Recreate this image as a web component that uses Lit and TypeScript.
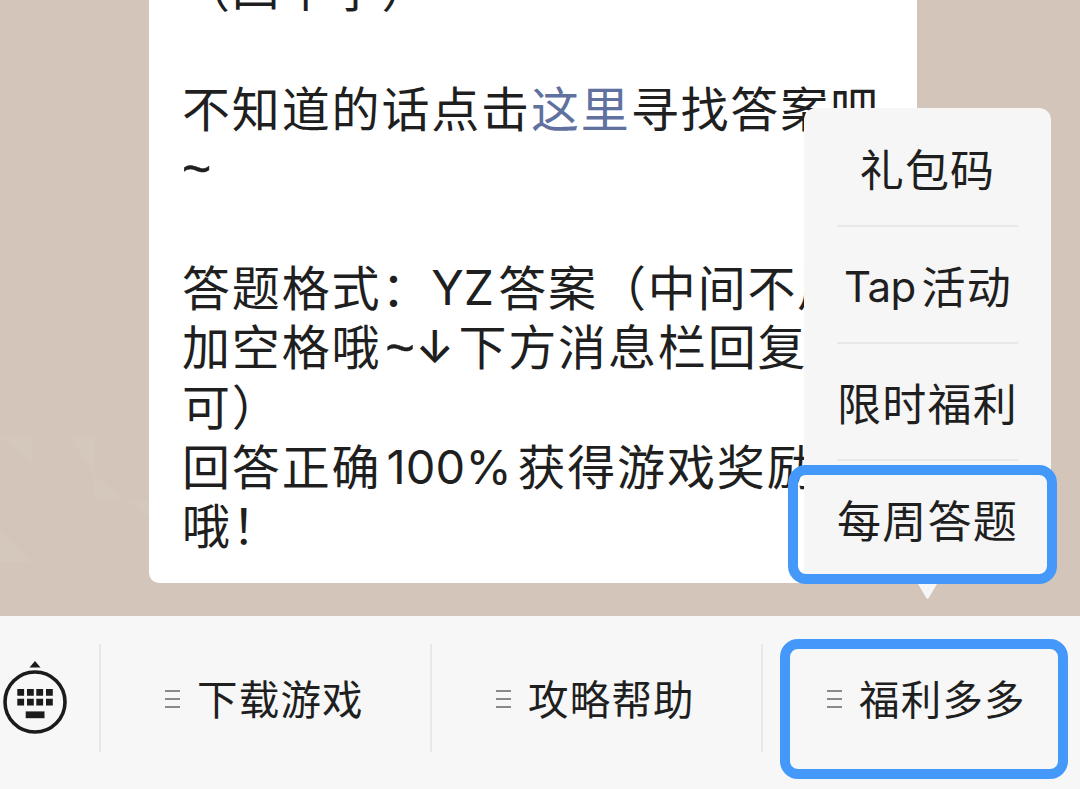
import { html, css, svg, LitElement } from 'lit';
import { customElement, property } from 'lit/decorators.js';
import { classMap } from 'lit/directives/class-map.js';

type Run = { text: string; kind?: 'link' | 'latin' | 'tilde' | 'arrow' | 'percent' };

const lines: Run[][] = [
  [{ text: '（四个字）' }],
  [],
  [{ text: '不知道的话点击' }, { text: '这里', kind: 'link' }, { text: '寻找答案吧' }],
  [{ text: '~', kind: 'tilde' }],
  [],
  [{ text: '答题格式：' }, { text: 'YZ', kind: 'latin' }, { text: '答案（中间不用' }],
  [{ text: '加空格哦' }, { text: '~', kind: 'tilde' }, { text: '↓', kind: 'arrow' }, { text: '下方消息栏回复即' }],
  [{ text: '可）' }],
  [{ text: '回答正确' }, { text: '100%', kind: 'percent' }, { text: '获得游戏奖励' }],
  [{ text: '哦！' }],
];

@customElement('chat-message')
export class ChatMessage extends LitElement {
  static styles = css`
    :host {
      display: block;
      width: 768px;
      box-sizing: border-box;
      padding: 0 0 29px 33px;
      background: #fff;
      border-radius: 10px;
      color: #1f1f1f;
      font-size: 48px;
      letter-spacing: 1.85px;
    }
    .line {
      height: 59.7px;
      line-height: 59.7px;
      white-space: pre;
      display: flex;
    }
    .link {
      color: #61719f;
    }
    .latin, .percent, .arrow {
      font-family: Inter, sans-serif;
      letter-spacing: 0;
      flex: none;
    }
    .latin {
      width: 67px;
      padding-top: 2px;
      box-sizing: border-box;
    }
    .tilde {
      font-family: 'Liberation Sans', sans-serif;
      font-size: 50px;
      letter-spacing: 0;
      width: 33px;
      padding: 4px 0 0 4px;
      box-sizing: border-box;
      flex: none;
      -webkit-text-stroke: 0.5px currentColor;
    }
    .tilde:first-child {
      padding-left: 0;
    }
    .arrow {
      width: 44px;
      font-size: 45px;
      font-weight: 500;
      text-indent: 1px;
      padding-top: 2px;
      box-sizing: border-box;
    }
    .percent {
      width: 136px;
      padding: 2px 0 0 5px;
      font-size: 47px;
      letter-spacing: 0.2px;
      box-sizing: border-box;
    }
  `;

  render() {
    return html`${lines.map(
      (line) => html`<div class="line">${line.map((r) => html`<span class="${r.kind ?? 'text'}">${r.text}</span>`)}</div>`
    )}`;
  }
}

@customElement('popup-menu')
export class PopupMenu extends LitElement {
  static styles = css`
    :host {
      display: block;
      width: 247px;
      height: 475px;
      background: #f6f6f6;
      border-radius: 12px 12px 10px 10px;
      color: #1f1f1f;
      font-size: 44px;
      letter-spacing: 1.2px;
    }
    .item {
      position: relative;
      height: 117px;
      margin: 0 33px;
      box-sizing: border-box;
      border-bottom: 2px solid #e8e8e8;
      display: flex;
      align-items: center;
      justify-content: center;
      white-space: nowrap;
      padding-top: 1px;
    }
    .item:first-child {
      height: 119px;
      padding-top: 3px;
    }
    .item:last-of-type {
      border-bottom-color: transparent;
    }
    .latin {
      font-family: Inter, sans-serif;
      font-size: 42px;
      letter-spacing: -0.6px;
      margin: 0 6px 0 1px;
      padding-top: 2px;
    }
    .marked::after {
      content: '';
      position: absolute;
      inset: 4px -39px -8px -49px;
      border: 10px solid #4398fa;
      border-radius: 18px;
    }
    .tip {
      position: absolute;
      left: 114px;
      top: 476px;
      width: 19px;
      height: 15px;
      background: #f6f6f6;
      clip-path: polygon(0 0, 100% 0, 56% 94%, 50% 100%, 44% 94%);
    }
  `;

  render() {
    return html`
      <div class="item">礼包码</div>
      <div class="item"><span class="latin">Tap</span>活动</div>
      <div class="item">限时福利</div>
      <div class="item marked">每周答题</div>
      <span class="tip"></span>
    `;
  }
}

@customElement('menu-tab')
export class MenuTab extends LitElement {
  @property() label = '';
  @property({ type: Boolean }) marked = false;

  static styles = css`
    :host {
      display: block;
      width: 331px;
      height: 108px;
      box-sizing: border-box;
      border-left: 2px solid #e8e8e8;
      flex: none;
    }
    .tab {
      position: relative;
      display: flex;
      align-items: center;
      height: 108px;
      padding-left: 64px;
      color: #1f1f1f;
      font-size: 40.5px;
      letter-spacing: 1.2px;
      white-space: nowrap;
    }
    .bars {
      width: 15px;
      height: 18px;
      margin: 1px 17px 0 0;
      flex: none;
      display: flex;
      flex-direction: column;
      justify-content: space-between;
    }
    .bar {
      height: 2px;
      background: #8a8a8a;
    }
    .label {
      margin-top: -2px;
    }
    .marked::after {
      content: '';
      position: absolute;
      left: 17px;
      top: -5px;
      width: 268px;
      height: 120px;
      border: 10px solid #4398fa;
      border-radius: 18px;
    }
  `;

  render() {
    return html`
      <div class=${classMap({ tab: true, marked: this.marked })}>
        <span class="bars"><i class="bar"></i><i class="bar"></i><i class="bar"></i></span>
        <span class="label">${this.label}</span>
      </div>
    `;
  }
}

@customElement('app-root')
export class AppRoot extends LitElement {
  static styles = css`
    :host {
      position: relative;
      display: flex;
      flex-direction: column;
      width: 1080px;
      height: 789px;
      overflow: hidden;
      background: #f7f7f7;
      font-family: 'Noto Sans CJK SC', sans-serif;
    }
    .chat {
      position: relative;
      height: 616px;
      box-sizing: border-box;
      padding: 0 0 33px 149px;
      background: #d3c5ba;
      display: flex;
      flex-direction: column;
      justify-content: flex-end;
      flex: none;
      overflow: hidden;
    }
    chat-message {
      position: relative;
      flex: none;
    }
    .pattern {
      position: absolute;
      left: 0;
      top: 0;
    }
    .bar {
      flex: 1;
      display: flex;
      padding-top: 28px;
      box-sizing: border-box;
    }
    .keyboard {
      width: 99px;
      flex: none;
    }
    .keyboard svg {
      display: block;
      margin-top: 14px;
    }
    popup-menu {
      position: absolute;
      left: 804px;
      top: 108px;
    }
  `;

  render() {
    const keys = [17.3, 27, 36.3, 46];
    return html`
      <div class="chat">
        <svg class="pattern" width="149" height="616" fill="#d4c7bc">
          <path d="M0 436H32V466ZM68 436H94V474ZM94 474 122 499H94ZM0 530 31 562H0ZM128 500H149V520Z" />
        </svg>
        <chat-message></chat-message>
      </div>
      <div class="bar">
        <div class="keyboard">
          <svg width="70" height="80" viewBox="0 0 70 80" fill="#1b1b1b">
            <path d="M35 3 40.5 9.5H29.5Z" />
            <circle cx="35" cy="44" r="30" fill="none" stroke="#1b1b1b" stroke-width="3.6" />
            ${keys.map((x) => svg`<path d="M${x} 31h6.8v6.8h-6.8zM${x} 40.7h6.8v6.8h-6.8z" />`)}
            <rect x="25.7" y="53.4" width="18.8" height="6.8" />
          </svg>
        </div>
        <menu-tab label="下载游戏"></menu-tab>
        <menu-tab label="攻略帮助"></menu-tab>
        <menu-tab label="福利多多" marked></menu-tab>
      </div>
      <popup-menu></popup-menu>
    `;
  }
}
